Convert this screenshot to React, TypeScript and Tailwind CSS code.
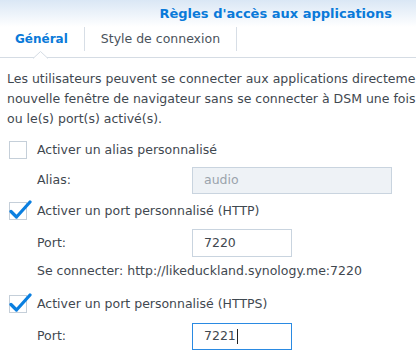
import type { ReactNode } from 'react';

function Checkbox({ checked }: { checked?: boolean }) {
  return (
    <span className="relative block h-[18px] w-[18px] shrink-0 border border-[#c5cfd9] bg-white">
      {checked && (
        <svg
          className="absolute -left-[1px] -top-[5px] h-[22px] w-[24px]"
          viewBox="0 0 24 22"
          fill="none"
        >
          <path
            d="M2 13.5 L7.5 19 L21 4"
            stroke="#0a7fe0"
            strokeWidth={3.2}
            strokeLinecap="round"
            strokeLinejoin="round"
          />
        </svg>
      )}
    </span>
  );
}

function CheckRow({ checked, className, children }: { checked?: boolean; className: string; children: ReactNode }) {
  return (
    <div className={`flex h-[28px] items-center pl-[2px] ${className}`}>
      <Checkbox checked={checked} />
      <span className="ml-[10px]">{children}</span>
    </div>
  );
}

function FieldRow({ label, className, children }: { label: string; className: string; children: ReactNode }) {
  return (
    <div className={`flex items-center pl-[30px] ${className}`}>
      <span className="w-[155px]">{label}</span>
      {children}
    </div>
  );
}

export default function App() {
  return (
    <div className="h-[355px] w-[416px] overflow-hidden bg-white font-['DejaVu_Sans',Verdana,sans-serif] text-[12.5px] text-[#3f4850]">
      <div className="flex h-[27px] items-center justify-end bg-gradient-to-b from-[#dae7f5] to-white pr-[24px]">
        <h1 className="text-[13px] font-bold text-[#0a7ad9]">Règles d'accès aux applications</h1>
      </div>

      {/* onglets */}
      <div className="relative flex h-[31px] border-b border-[#d5dce4]">
        <div className="flex h-[24px] items-center pl-[15px] pr-[16px] text-[12px] font-bold text-[#0a7ad9]">
          Général
        </div>
        <div className="h-[24px] w-px bg-[#d7dee6]" />
        <div className="flex h-[24px] items-center px-[16px] text-[12.5px] text-[#4a535c]">Style de connexion</div>
        <div className="h-[24px] w-px bg-[#d7dee6]" />
        <svg className="absolute left-[33px] top-[24px] h-[8px] w-[15px]" viewBox="0 0 15 8">
          <path d="M0 7.5 L7.5 0.5 L15 7.5" fill="white" stroke="#d5dce4" strokeWidth={1} />
        </svg>
      </div>

      <div className="px-[7px]">
        <p className="mt-[11px] whitespace-nowrap leading-[20px]">
          Les utilisateurs peuvent se connecter aux applications directement dans une
          <br />
          nouvelle fenêtre de navigateur sans se connecter à DSM une fois qu'ils ont accédé à l'alias
          <br />
          ou le(s) port(s) activé(s).
        </p>

        <CheckRow className="mt-[7px]">Activer un alias personnalisé</CheckRow>
        <FieldRow label="Alias:" className="mt-[3px]">
          <div className="flex h-[27px] w-[200px] items-center border border-[#c9d4df] bg-[#eef2f6] pl-[11px] text-[#9aa3ac]">
            audio
          </div>
        </FieldRow>

        <CheckRow checked className="mt-[3px]">Activer un port personnalisé (HTTP)</CheckRow>
        <FieldRow label="Port:" className="mt-[4px]">
          <div className="flex h-[28px] w-[100px] items-center border border-[#c9d4df] bg-white pl-[11px]">7220</div>
        </FieldRow>
        <div className="mt-[4px] flex h-[20px] items-center whitespace-nowrap pl-[30px]">
          Se connecter: http://likeduckland.synology.me:7220
        </div>

        <CheckRow checked className="mt-[9px]">Activer un port personnalisé (HTTPS)</CheckRow>
        <FieldRow label="Port:" className="mt-[5px]">
          <div className="flex h-[27px] w-[100px] items-center border border-[#2a8ae2] bg-white pl-[11px]">
            7221
            <span className="ml-[1px] h-[15px] w-px bg-[#222]" />
          </div>
        </FieldRow>
      </div>
    </div>
  );
}
